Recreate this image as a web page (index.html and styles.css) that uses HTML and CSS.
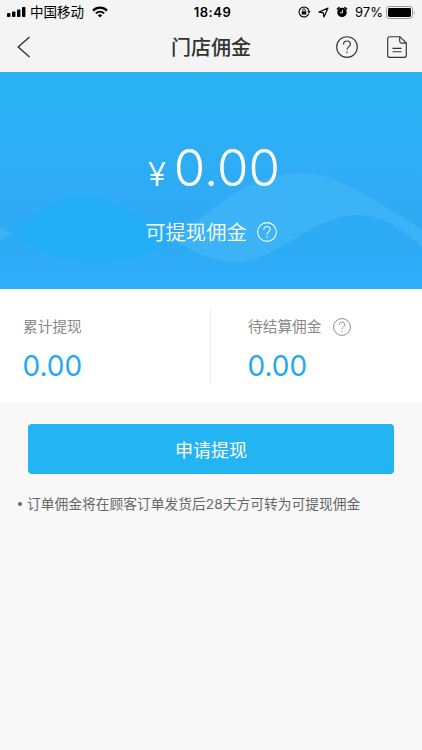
FILE: index.html
```html
<!DOCTYPE html>
<html lang="zh-CN">
<head>
    <meta charset="UTF-8">
    <meta name="viewport" content="width=device-width, initial-scale=1.0">
    <title>门店佣金</title>
    <link rel="stylesheet" href="styles.css">
</head>
<body>

<div class="status-bar">
    <div class="status-left">
        <svg class="signal" width="19" height="10" viewBox="0 0 19 10">
            <rect x="0" y="6" width="3.4" height="4" rx="0.8"/>
            <rect x="5" y="4.5" width="3.4" height="5.5" rx="0.8"/>
            <rect x="10" y="2.5" width="3.4" height="7.5" rx="0.8"/>
            <rect x="15" y="0" width="3.4" height="10" rx="0.8"/>
        </svg>
        <span class="carrier">中国移动</span>
        <svg class="wifi" width="16" height="12" viewBox="0 0 16 12">
            <path d="M1 4.6C5 .7 11 .7 15 4.6" fill="none" stroke="#000" stroke-width="2.2"/>
            <path d="M3.8 7.4C6.2 5.1 9.8 5.1 12.2 7.4" fill="none" stroke="#000" stroke-width="1.9"/>
            <path d="M5.8 9.2Q8 7.4 10.2 9.2L8 11.5Z"/>
        </svg>
    </div>
    <span class="time">18:49</span>
    <div class="status-right">
        <svg class="lock" width="13" height="12" viewBox="0 0 13 12">
            <path d="M10.7 7.8A5 5 0 1 1 11 5.4" fill="none" stroke="#000" stroke-width="1.1"/>
            <path d="M9.2 5.2H12.8L11 7.4Z"/>
            <rect x="3.7" y="5.2" width="4.6" height="3.4" rx="0.4"/>
            <path d="M4.6 5.4V4.3A1.4 1.4 0 0 1 7.4 4.3V5.4" fill="none" stroke="#000" stroke-width="0.9"/>
        </svg>
        <svg class="arrow" width="11" height="11" viewBox="0 0 11 11">
            <path d="M10 1L1 5.1L5.3 5.8L6 10Z" fill="none" stroke="#000" stroke-width="1.2" stroke-linejoin="round"/>
        </svg>
        <svg class="alarm" width="12" height="12" viewBox="0 0 12 12">
            <circle cx="6" cy="6.4" r="4.7"/>
            <path d="M1.4 3L3 1.6M9 1.6L10.6 3" stroke="#000" stroke-width="1.5" stroke-linecap="round"/>
            <path d="M6.4 3.8V6.8H4" fill="none" stroke="#f4f4f4" stroke-width="1"/>
        </svg>
        <span class="percent">97%</span>
        <svg class="battery" width="30" height="13" viewBox="0 0 30 13">
            <rect x="0.5" y="0.5" width="26" height="12" rx="2.8" fill="none" stroke="#999"/>
            <rect x="2" y="2" width="23" height="9" rx="1.4"/>
            <path d="M27.8 4.5Q29.4 6.5 27.8 8.5Z" fill="#999"/>
        </svg>
    </div>
</div>

<header class="nav-bar">
    <svg class="back" width="14" height="22" viewBox="0 0 14 22">
        <path d="M12.5 1L1.2 11L12.5 21" fill="none" stroke="#333" stroke-width="1.4"/>
    </svg>
    <h1>门店佣金</h1>
    <div class="nav-actions">
        <svg width="22" height="22" viewBox="0 0 22 22" class="help">
            <circle cx="11" cy="11" r="10.3"/>
            <path d="M7.5 8.5C7.5 3.8 14.5 3.9 14.5 8.1C14.5 10.7 11 10.6 11 13.7M11 15.4V17"/>
        </svg>
        <svg width="20" height="22" viewBox="0 0 20 22" class="doc">
            <path d="M13 .7H2.7A2 2 0 0 0 .7 2.7V19.3A2 2 0 0 0 2.7 21.3H17.3A2 2 0 0 0 19.3 19.3V7ZM12.7 1V5.3A1.8 1.8 0 0 0 14.5 7.1H19M5.5 12.3H14.5M5.5 15.7H14.5"/>
        </svg>
    </div>
</header>

<section class="banner">
    <svg class="waves" width="422" height="217" viewBox="0 0 422 217">
        <path d="M12 161C35 140 55 124 82 124C115 124 140 146 172 167C150 184 125 190 97 190C60 190 35 178 12 161Z" fill="#22aff6"/>
        <path d="M172 167C190 178 210 190 233 190C280 190 310 143 358 143C385 143 405 160 422 175V158C380 132 340 101 300 101C245 101 215 139 172 167ZM0 155L12 161L0 168Z" fill="#3cb2f7"/>
    </svg>
    <div class="amount"><span class="yen">¥</span><span class="number">0.00</span></div>
    <div class="amount-label">
        <span>可提现佣金</span>
        <svg width="20" height="20" viewBox="0 0 22 22" class="help">
            <circle cx="11" cy="11" r="10.3"/>
            <path d="M7.5 8.5C7.5 3.8 14.5 3.9 14.5 8.1C14.5 10.7 11 10.6 11 13.7M11 15.4V17"/>
        </svg>
    </div>
</section>

<section class="stats">
    <div class="stat">
        <div class="stat-label"><span>累计提现</span></div>
        <div class="stat-value">0.00</div>
    </div>
    <div class="stat">
        <div class="stat-label">
            <span>待结算佣金</span>
            <svg width="18" height="18" viewBox="0 0 22 22" class="help">
                <circle cx="11" cy="11" r="10.3"/>
                <path d="M7.5 8.5C7.5 3.8 14.5 3.9 14.5 8.1C14.5 10.7 11 10.6 11 13.7M11 15.4V17"/>
            </svg>
        </div>
        <div class="stat-value">0.00</div>
    </div>
</section>

<button class="withdraw">申请提现</button>

<p class="note"><span class="dot"></span>订单佣金将在顾客订单发货后28天方可转为可提现佣金</p>

</body>
</html>
```
FILE: styles.css
```css
* {
    box-sizing: border-box;
}

body {
    font-family: Inter, 'Noto Sans CJK SC', sans-serif;
    margin: 0;
    min-height: 750px;
    background-color: #f8f8f8;
    color: #333;
}

svg {
    display: block;
    flex: none;
}

/* Status bar */
.status-bar {
    display: grid;
    grid-template-columns: 1fr auto 1fr;
    align-items: center;
    height: 24px;
    padding: 0 6px 0 7px;
    background-color: #f4f4f4;
    color: #000;
    font-size: 13px;
    line-height: 24px;
}

.status-left,
.status-right {
    display: flex;
    align-items: center;
}

.status-right {
    justify-content: flex-end;
}

.carrier {
    margin: 0 8px 0 4px;
    font-size: 13.5px;
}

.time {
    padding-left: 2px;
    font-size: 13px;
    font-weight: 600;
    letter-spacing: 0.5px;
}

.arrow {
    margin: 0 7px 0 7px;
}

.percent {
    margin: 0 3px 0 7px;
}

/* Navigation bar */
.nav-bar {
    display: grid;
    grid-template-columns: 1fr auto 1fr;
    align-items: center;
    height: 48px;
    padding: 0 15px 2px 17px;
    background-color: #f4f4f4;
}

.nav-bar h1 {
    margin: 2px 2px 0 0;
    font-size: 20px;
    font-weight: 500;
    line-height: 30px;
}

.nav-actions {
    display: flex;
    justify-content: flex-end;
    gap: 29px;
}

.help,
.doc {
    fill: none;
    stroke: currentColor;
    stroke-width: 1.15;
}

/* Balance banner */
.banner {
    position: relative;
    height: 217px;
    padding-top: 66px;
    background: linear-gradient(#29b3f3, #30abf6 55%, #2dabf5 80%, #30adf8);
    color: #fff;
}

.waves {
    position: absolute;
    top: 0;
    left: 0;
}

.amount {
    position: relative;
    display: flex;
    justify-content: center;
    align-items: baseline;
    gap: 8px;
    height: 60px;
    padding-left: 6px;
    line-height: 60px;
}

.yen {
    font-size: 33px;
    font-weight: 300;
}

.number {
    font-size: 51px;
    font-weight: 350;
}

.amount-label {
    position: relative;
    display: flex;
    justify-content: center;
    align-items: center;
    gap: 10px;
    margin-top: 18px;
    font-size: 20.3px;
    font-weight: 350;
    line-height: 30px;
}

.amount-label span {
    padding-top: 2px;
}

/* Totals */
.stats {
    display: flex;
    height: 113px;
    padding: 19px 0 18px;
    background-color: #fff;
}

.stat {
    width: 211px;
    padding-left: 23px;
}

.stat + .stat {
    padding-left: 37px;
}

.stat:first-child {
    border-right: 1px solid #eee;
}

.stat-label {
    display: flex;
    align-items: center;
    gap: 12px;
    height: 38px;
    color: #888;
    font-size: 14.7px;
    line-height: 20px;
}

.stat-value {
    margin-left: -0.5px;
    color: #26a9ea;
    font-size: 28px;
    line-height: 41px;
}

/* Withdraw */
.withdraw {
    display: block;
    width: 366px;
    height: 50px;
    margin: 22px 0 0 28px;
    padding: 0;
    border: none;
    border-radius: 4px;
    background-color: #23b4f3;
    color: #fff;
    font-family: inherit;
    font-size: 18px;
}

.note {
    display: flex;
    align-items: center;
    margin: 20px 0 0 18px;
    color: #666;
    font-size: 13.75px;
    line-height: 20px;
    white-space: nowrap;
}

.dot {
    width: 4px;
    height: 4px;
    margin-right: 5px;
    border-radius: 50%;
    background-color: #666;
}
```
